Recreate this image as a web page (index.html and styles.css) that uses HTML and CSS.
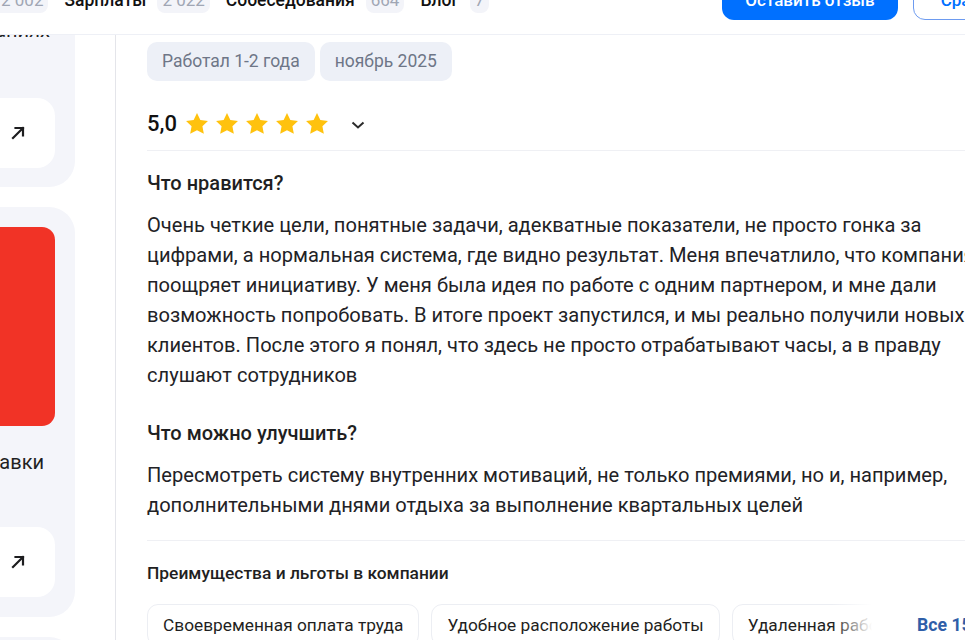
FILE: index.html
```html
<!DOCTYPE html>
<html lang="ru">
<head>
<meta charset="utf-8">
<title>Отзыв</title>
<link rel="stylesheet" href="styles.css">
</head>
<body>
<header class="topbar">
  <nav class="nav">
    <span class="badge badge-first">2 002</span>
    <a class="nav-link">Зарплаты</a><span class="badge">2 022</span>
    <a class="nav-link">Собеседования</a><span class="badge">664</span>
    <a class="nav-link">Блог</a><span class="badge">7</span>
  </nav>
  <div class="actions">
    <button class="btn-primary">Оставить отзыв</button>
    <button class="btn-outline">Сравнить</button>
  </div>
</header>
<div class="layout">
  <aside class="sidebar">
    <div class="side-card first">
      <div class="side-text"><span>Отзывы о собеседованиях</span></div>
      <div class="side-btn">
        <svg width="14" height="14" viewBox="0 0 14 14"><path d="M2 12 L12 2 M4.5 2 H12 V9.5" fill="none" stroke="#1d1d1f" stroke-width="2.2" stroke-linecap="square"/></svg>
      </div>
    </div>
    <div class="side-card second">
      <div class="promo"></div>
      <div class="side-text lower"><span>Зарплатные ставки</span></div>
      <div class="side-btn">
        <svg width="14" height="14" viewBox="0 0 14 14"><path d="M2 12 L12 2 M4.5 2 H12 V9.5" fill="none" stroke="#1d1d1f" stroke-width="2.2" stroke-linecap="square"/></svg>
      </div>
    </div>
    <div class="side-card third"></div>
  </aside>
  <main class="review">
    <div class="tags">
      <span class="tag">Работал 1-2 года</span>
      <span class="tag">ноябрь 2025</span>
    </div>
    <div class="rating">
      <span class="score">5,0</span>
      <span class="stars">
        <svg class="star" viewBox="0 0 24 24"><path d="M12 1.8l3.1 6.5 7 .9-5.1 4.9 1.3 7L12 17.7l-6.3 3.4 1.3-7L1.9 9.2l7-.9z"/></svg>
        <svg class="star" viewBox="0 0 24 24"><path d="M12 1.8l3.1 6.5 7 .9-5.1 4.9 1.3 7L12 17.7l-6.3 3.4 1.3-7L1.9 9.2l7-.9z"/></svg>
        <svg class="star" viewBox="0 0 24 24"><path d="M12 1.8l3.1 6.5 7 .9-5.1 4.9 1.3 7L12 17.7l-6.3 3.4 1.3-7L1.9 9.2l7-.9z"/></svg>
        <svg class="star" viewBox="0 0 24 24"><path d="M12 1.8l3.1 6.5 7 .9-5.1 4.9 1.3 7L12 17.7l-6.3 3.4 1.3-7L1.9 9.2l7-.9z"/></svg>
        <svg class="star" viewBox="0 0 24 24"><path d="M12 1.8l3.1 6.5 7 .9-5.1 4.9 1.3 7L12 17.7l-6.3 3.4 1.3-7L1.9 9.2l7-.9z"/></svg>
      </span>
      <svg class="chevron" width="16" height="10" viewBox="0 0 16 10"><path d="M2.5 2.5 L8 7.5 L13.5 2.5" fill="none" stroke="#2b2b2b" stroke-width="2"/></svg>
    </div>
    <section class="block">
      <h3 class="q">Что нравится?</h3>
      <p class="answer">Очень четкие цели, понятные задачи, адекватные показатели, не просто гонка за цифрами, а нормальная система, где видно результат. Меня впечатлило, что компания поощряет инициативу. У меня была идея по работе с одним партнером, и мне дали возможность попробовать. В итоге проект запустился, и мы реально получили новых клиентов. После этого я понял, что здесь не просто отрабатывают часы, а в правду слушают сотрудников</p>
      <h3 class="q q2">Что можно улучшить?</h3>
      <p class="answer">Пересмотреть систему внутренних мотиваций, не только премиями, но и, например, дополнительными днями отдыха за выполнение квартальных целей</p>
    </section>
    <section class="benefits">
      <h4 class="benefits-title">Преимущества и льготы в компании</h4>
      <div class="benefits-row">
        <div class="chips">
          <span class="chip">Своевременная оплата труда</span>
          <span class="chip">Удобное расположение работы</span>
          <span class="chip">Удаленная работа</span>
        </div>
        <a class="all-link">Все 15</a>
      </div>
    </section>
  </main>
</div>
</body>
</html>
```
FILE: styles.css
```css
* { box-sizing: border-box; }
html, body { margin: 0; padding: 0; }
body {
  width: 965px;
  height: 640px;
  overflow: hidden;
  background: #fff;
  font-family: Roboto, "Noto Sans", "Liberation Sans", sans-serif;
  color: #1f1f22;
}
.topbar {
  height: 69px;
  margin-top: -34px;
  display: flex;
  align-items: center;
  justify-content: space-between;
  border-bottom: 1px solid #eef0f6;
  position: relative;
  z-index: 2;
  background: #fff;
  white-space: nowrap;
}
.nav {
  display: flex;
  align-items: center;
  margin-left: -15px;
}
.nav-link {
  font-size: 17.5px;
  font-weight: 500;
  color: #111;
  margin-left: 16px;
  margin-right: 11px;
}
.badge {
  background: #f3f4f9;
  color: #a0a6b4;
  font-size: 17px;
  border-radius: 8px;
  padding: 0 5px;
  height: 26px;
  line-height: 26px;
}
.badge-first { padding-left: 16px; }
.actions {
  display: flex;
  align-items: center;
  gap: 15px;
  margin-right: -80px;
}
.btn-primary {
  font: 500 17px Roboto, sans-serif;
  background: #0070ff;
  color: #fff;
  border: none;
  border-radius: 12px;
  width: 176px;
  height: 40px;
}
.btn-outline {
  font: 500 17px Roboto, sans-serif;
  background: #fff;
  color: #0070ff;
  border: 1px solid #6d9bf0;
  border-radius: 12px;
  width: 132px;
  height: 40px;
}
.layout {
  display: flex;
  height: 606px;
}
.sidebar {
  width: 116px;
  flex: none;
  border-right: 1.5px solid #e4e5ea;
  overflow: hidden;
}
.side-card {
  width: 200px;
  margin-left: -125px;
  background: #f4f5fa;
  border-radius: 26px;
  padding: 20px;
}
.side-card.first {
  margin-top: -60px;
  padding-top: 44px;
  padding-bottom: 19px;
}
.side-card.second { margin-top: 20px; }
.side-card.third { margin-top: 20px; height: 100px; }
.side-text {
  display: flex;
  justify-content: flex-end;
  padding-right: 5px;
  font-size: 20px;
  line-height: 22px;
  color: #1f1f22;
  white-space: nowrap;
}
.side-text span { flex: none; }
.side-card.first .side-btn { margin-top: 57px; }
.side-btn {
  height: 70px;
  background: #fff;
  border-radius: 18px;
  display: flex;
  align-items: center;
  justify-content: flex-end;
  padding-right: 30px;
}
.promo {
  height: 199px;
  background: #f13326;
  border-radius: 13px;
}
.side-text.lower { margin-top: 25px; padding-right: 11px; }
.side-card.second .side-btn { margin-top: 54px; }
.review {
  padding-left: 31px;
  width: 850px;
  flex: none;
}
.tags {
  display: flex;
  gap: 5px;
  margin-top: 7px;
}
.tag {
  background: #edf0f7;
  color: #6e7687;
  font-size: 17.5px;
  height: 39px;
  line-height: 39px;
  padding: 0 15px;
  border-radius: 10px;
}
.rating {
  display: flex;
  align-items: center;
  height: 70px;
  padding-top: 16px;
  border-bottom: 1px solid #eff0f4;
}
.score {
  font-size: 22px;
  font-weight: 500;
  color: #111;
  margin-right: 7px;
}
.stars { display: flex; gap: 4px; }
.star { width: 26px; height: 26px; fill: #ffc20e; }
.chevron { margin-left: 20px; margin-top: 2px; }
.block { padding-top: 20px; border-bottom: 1px solid #eff0f4; padding-bottom: 20px; width: 818px; }
.q {
  margin: 0;
  font-size: 20px;
  font-weight: 500;
  line-height: 24px;
  color: #1f1f22;
}
.q2 { margin-top: 31px; }
.answer {
  margin: 15px 0 0;
  font-size: 20.1px;
  line-height: 30px;
  color: #222226;
  width: 840px;
}
.benefits { padding-top: 21px; }
.benefits-title {
  margin: 0;
  font-size: 17.4px;
  font-weight: 500;
  line-height: 22px;
  color: #1f1f22;
}
.benefits-row {
  display: flex;
  align-items: center;
  margin-top: 20px;
}
.chips {
  display: flex;
  gap: 12px;
  width: 735px;
  overflow: hidden;
  position: relative;
  flex: none;
}
.chips::after {
  content: "";
  position: absolute;
  right: 0;
  top: 0;
  bottom: 0;
  width: 50px;
  background: linear-gradient(to right, rgba(255,255,255,0), #fff 80%);
}
.chip {
  flex: none;
  border: 1px solid #eceef3;
  border-radius: 11px;
  height: 42px;
  line-height: 40px;
  padding: 0 15px;
  font-size: 17.3px;
  color: #1f1f22;
  white-space: nowrap;
}
.all-link {
  margin-left: 35px;
  font-size: 17.7px;
  font-weight: 700;
  color: #2f5ea8;
  white-space: nowrap;
}
```
